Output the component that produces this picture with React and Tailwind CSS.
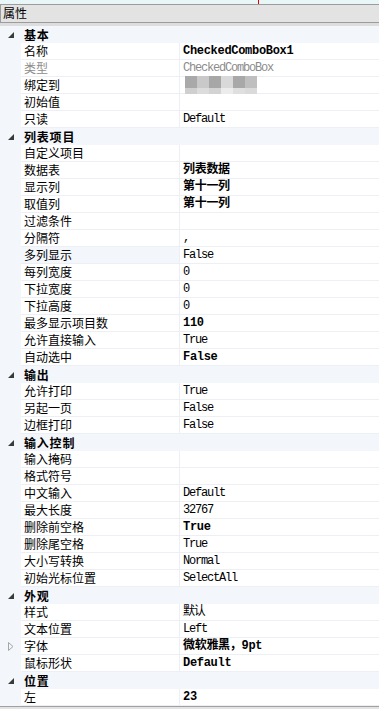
const SECTIONS = [
  {
    title: '基本',
    rows: [
      { name: '名称', value: 'CheckedComboBox1', bold: true },
      { name: '类型', value: 'CheckedComboBox', gray: true },
      { name: '绑定到', value: '', blur: true },
      { name: '初始值', value: '' },
      { name: '只读', value: 'Default' },
    ],
  },
  {
    title: '列表项目',
    rows: [
      { name: '自定义项目', value: '' },
      { name: '数据表', value: '列表数据', bold: true },
      { name: '显示列', value: '第十一列', bold: true },
      { name: '取值列', value: '第十一列', bold: true },
      { name: '过滤条件', value: '' },
      { name: '分隔符', value: ',' },
      { name: '多列显示', value: 'False', selected: true },
      { name: '每列宽度', value: '0' },
      { name: '下拉宽度', value: '0' },
      { name: '下拉高度', value: '0' },
      { name: '最多显示项目数', value: '110', bold: true },
      { name: '允许直接输入', value: 'True' },
      { name: '自动选中', value: 'False', bold: true },
    ],
  },
  {
    title: '输出',
    rows: [
      { name: '允许打印', value: 'True' },
      { name: '另起一页', value: 'False' },
      { name: '边框打印', value: 'False' },
    ],
  },
  {
    title: '输入控制',
    rows: [
      { name: '输入掩码', value: '' },
      { name: '格式符号', value: '' },
      { name: '中文输入', value: 'Default' },
      { name: '最大长度', value: '32767' },
      { name: '删除前空格', value: 'True', bold: true },
      { name: '删除尾空格', value: 'True' },
      { name: '大小写转换', value: 'Normal' },
      { name: '初始光标位置', value: 'SelectAll' },
    ],
  },
  {
    title: '外观',
    rows: [
      { name: '样式', value: '默认' },
      { name: '文本位置', value: 'Left' },
      { name: '字体', value: '微软雅黑，9pt', bold: true, expand: true },
      { name: '鼠标形状', value: 'Default', bold: true },
    ],
  },
  {
    title: '位置',
    rows: [{ name: '左', value: '23', bold: true }],
  },
]

const BLUR = [
  '#a9a9a9', '#c9c9c9', '#a7a7a7', '#d9d9d9', '#a8a8a8', '#bfbfbf',
  '#cfcfcf', '#dcdcdc', '#d3d3d3', '#ececec', '#dfdfdf', '#dadada',
]

function Blurred() {
  return (
    <div className="absolute left-[5px] top-[-1px] w-[72px] h-[24px] grid grid-cols-6 blur-[0.6px]">
      {BLUR.map((c, i) => (
        <div key={i} className="w-[12px] h-[12px]" style={{ backgroundColor: c }} />
      ))}
    </div>
  )
}

function Row({ row }) {
  return (
    <div className="flex h-[17px]">
      <div className="w-[21px] bg-[#f3f6fb] flex items-center justify-center">
        {row.expand && (
          <svg width="6" height="9" viewBox="0 0 6 9">
            <polygon points="0.5,0.5 5,4.5 0.5,8.5" fill="none" stroke="#a6a6a6" strokeWidth="1" />
          </svg>
        )}
      </div>
      <div
        className={`w-[159px] pl-[3px] border-b border-r border-[#eceff4] leading-[16px] text-[12px] overflow-hidden ${
          row.selected ? 'bg-[#f3f6fb]' : 'bg-white'
        } ${row.gray ? 'text-[#8c8c8c]' : 'text-black'}`}
      >
        {row.name}
      </div>
      <div
        className={`relative flex-1 pl-[3px] border-b border-[#eceff4] bg-white leading-[16px] whitespace-nowrap text-[12px] ${
          row.bold ? 'font-bold tracking-[-0.3px]' : 'tracking-[-1.2px]'
        } ${row.gray ? 'text-[#8c8c8c]' : 'text-black'}`}
        style={{ fontFamily: '"Liberation Mono", "Noto Sans CJK SC", monospace' }}
      >
        {row.value}
        {row.blur && <Blurred />}
      </div>
    </div>
  )
}

function Section({ section }) {
  return (
    <div>
      <div className="flex h-[17px] bg-[#f3f6fb] overflow-hidden">
        <div className="w-[21px] flex items-center justify-center">
          <svg width="6" height="6" viewBox="0 0 6 6">
            <polygon points="6,0 6,6 0,6" fill="#3a3a3a" />
          </svg>
        </div>
        <div className="pl-[3px] text-[12px] font-bold leading-[17px] tracking-[0.8px] text-black">
          {section.title}
        </div>
      </div>
      {section.rows.map(r => (
        <Row key={r.name} row={r} />
      ))}
    </div>
  )
}

export default function App() {
  return (
    <div
      className="w-[379px] h-[709px] bg-white overflow-hidden"
      style={{ fontFamily: '"Noto Sans CJK SC", "Liberation Sans", sans-serif' }}
    >
      <div className="relative h-[4px] bg-[#e9f6f8]">
        <div className="absolute left-[258px] top-0 w-px h-[4px] bg-[#e00000]" />
      </div>
      <div className="h-[19px] border-y border-l border-[#9c9c9c] bg-[#e3e3e3] pl-[2px] text-[12px] leading-[16px] text-black">
        属性
      </div>
      <div className="h-[3px] bg-[#dddddd]" />
      {SECTIONS.map(s => (
        <Section key={s.title} section={s} />
      ))}
      <div className="h-[3px] border-t border-[#a0a0a0] bg-[#e3e3e3]" />
    </div>
  )
}
